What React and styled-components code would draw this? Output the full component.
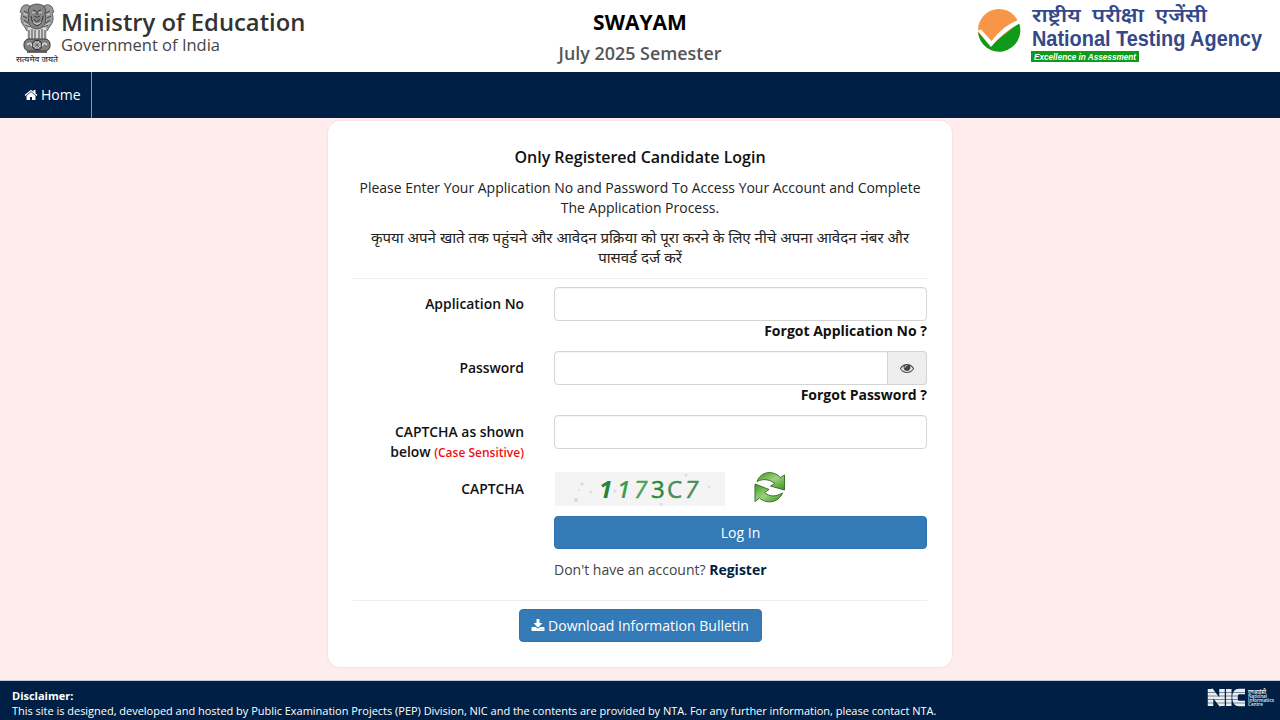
import { useState } from "react";
import styled, { createGlobalStyle } from "styled-components";

const HOME_PATH =
	"M1472 992v480q0 26-19 45t-45 19h-384v-384h-256v384h-384q-26 0-45-19t-19-45v-480q0-1 .5-3t.5-3l575-474 575 474q1 2 1 6zm223-69l-62 74q-8 9-21 11h-3q-13 0-21-7l-692-577-692 577q-12 8-24 7-13-2-21-11l-62-74q-8-10-7-23.5t11-21.5l719-599q32-26 76-26t76 26l244 204v-195q0-14 9-23t23-9h192q14 0 23 9t9 23v408l219 182q10 8 11 21.5t-7 23.5z";
const EYE_PATH =
	"M1664 960q-152-236-381-353 61 104 61 225 0 185-131.5 316.5t-316.5 131.5-316.5-131.5-131.5-316.5q0-121 61-225-229 117-381 353 133 205 333.5 326.5t434.5 121.5 434.5-121.5 333.5-326.5zm-720-384q0-20-14-34t-34-14q-125 0-214.5 89.5t-89.5 214.5q0 20 14 34t34 14 34-14 14-34q0-86 61-147t147-61q20 0 34-14t14-34zm848 384q0 34-20 69-140 230-376.5 368.5t-499.5 138.5-499.5-139-376.5-368q-20-35-20-69t20-69q140-229 376.5-368t499.5-139 499.5 139 376.5 368q20 35 20 69z";
const DOWNLOAD_PATH =
	"M1344 1344q0-26-19-45t-45-19-45 19-19 45 19 45 45 19 45-19 19-45zm256 0q0-26-19-45t-45-19-45 19-19 45 19 45 45 19 45-19 19-45zm128-224v320q0 40-28 68t-68 28h-1472q-40 0-68-28t-28-68v-320q0-40 28-68t68-28h465l135 136q58 56 136 56t136-56l136-136h464q40 0 68 28t28 68zm-325-569q17 41-14 70l-448 448q-18 19-45 19t-45-19l-448-448q-31-29-14-70 17-39 59-39h256v-448q0-26 19-45t45-19h256q26 0 45 19t19 45v448h256q42 0 59 39z";

const FaIcon = ({ path, size = 14 }) => (
	<svg width={size} height={size} viewBox="0 0 1792 1792" fill="currentColor">
		<path d={path} />
	</svg>
);

const Emblem = () => (
	<svg width="44" height="62" viewBox="0 0 44 62">
		{/* side lions */}
		<g fill="#9a9a9a" stroke="#4a4a4a" strokeWidth="0.8">
			<path d="M12 1C8 0 5 3 5 6l-1 2 2 1c-2 5-1 10 2 13l3 5h6V4z" />
			<path d="M30 1c4-1 7 2 7 5l1 2-2 1c2 5 1 10-2 13l-3 5h-6V4z" />
			<path d="M12 21l-1 12q0 6 3 8h14q3-2 3-8l-1-12z" fill="#d8d8d8" stroke="none" />
		</g>
		{/* front lion */}
		<path
			d="M14 2q7-4 14 0 3 4 1 8 2 8-2 13-6 4-12 0-4-5-2-13-2-4 1-8z"
			fill="#868686"
			stroke="#3c3c3c"
			strokeWidth="0.8"
		/>
		<g fill="none" stroke="#333" strokeWidth="0.9">
			<path d="M17 6l3 1M25 6l-3 1M21 7v4M18 12q3 3 6 0M15 12q1 9 6 10 5-1 6-10M18 15q3 5 6 0" />
			<path d="M8 7l4 2M7 12l4 2M8 16l4 3M34 7l-4 2M35 12l-4 2M34 16l-4 3M10 21l4 2M32 21l-4 2" />
			<path d="M13 26v10M16 25v12M19 26v11M23 26v11M26 25v12M29 26v10" />
		</g>
		<g stroke="#ddd" strokeWidth="0.9" fill="none">
			<path d="M16 9q2-2 3 0M23 9q2-2 3 0M17 18q4 4 8 0M8 10l3 1M34 10l-3 1M8 19l4 2M34 19l-4 2" />
		</g>
		{/* abacus with the wheel */}
		<rect x="8" y="35" width="26" height="12" rx="5" fill="#808080" stroke="#3c3c3c" />
		<circle cx="21" cy="41" r="4.600" fill="#ccc" stroke="#333" strokeWidth="1.200" />
		<path d="M21 37v8M17 41h8M18 38l6 6M24 38l-6 6" stroke="#555" strokeWidth="0.700" />
		<path d="M11 41q3-4 5 1M26 42q2-5 5-1" stroke="#ddd" strokeWidth="1.400" fill="none" />
		<path d="M11 48h20" stroke="#444" strokeWidth="1.600" />
		<text
			x="0"
			y="58"
			fontSize="8"
			fontWeight="500"
			fill="#333"
			textLength="42"
			lengthAdjust="spacingAndGlyphs"
		>
			सत्यमेव जयते
		</text>
	</svg>
);

const NtaLogo = () => (
	<svg width="292" height="66" viewBox="0 0 292 66">
		<circle cx="22" cy="27" r="21" fill="#f79646" />
		<path d="M1 29l12 14L42 20A21.200 21.200 0 1 1 1 29z" fill="#0f9a1a" />
		<path d="M0.500 27.500l3.500-1L14.500 38Q27 22 41 17l1.500 3.500Q26 29 14 44z" fill="#fff" />
		<g fill="#34488a">
			<text
				x="55"
				y="19"
				fontSize="19"
				fontWeight="600"
				textLength="175"
				wordSpacing="5"
				lengthAdjust="spacingAndGlyphs"
			>
				राष्ट्रीय परीक्षा एजेंसी
			</text>
			<text
				x="55"
				y="42.500"
				fontSize="21.500"
				fontWeight="700"
				fontFamily="Liberation Sans, Arial, sans-serif"
				textLength="230"
				lengthAdjust="spacingAndGlyphs"
			>
				National Testing Agency
			</text>
		</g>
		<rect x="54" y="48" width="108" height="11" fill="#0f9a1a" />
		<text
			x="57"
			y="56.700"
			fontSize="9"
			fontWeight="700"
			fontStyle="italic"
			fontFamily="Liberation Sans, Arial, sans-serif"
			fill="#fff"
			textLength="102"
			lengthAdjust="spacingAndGlyphs"
		>
			Excellence in Assessment
		</text>
	</svg>
);

const CaptchaImage = () => (
	<svg width="170" height="34" viewBox="0 0 170 34">
		<rect width="170" height="34" fill="#f5f4f5" />
		<g fill="#dddbe4">
			<circle cx="27" cy="12" r="1.800" />
			<circle cx="21" cy="28" r="2.200" />
			<circle cx="36" cy="20" r="1.500" />
			<circle cx="24" cy="18" r="1" />
			<circle cx="106" cy="32" r="1.500" />
			<circle cx="131" cy="3" r="1.500" />
			<circle cx="154" cy="15" r="1.200" />
			<circle cx="60" cy="19" r="1.500" />
		</g>
		<g fontFamily="Open Sans, sans-serif" fontSize="24" strokeWidth="0.500">
			<text x="44" y="26" fill="#24863a" fontWeight="700" fontStyle="italic">1</text>
			<text x="62" y="26" fill="#36a04a" fontWeight="600" fontStyle="italic">1</text>
			<text x="79" y="25.500" fill="#47a557" stroke="#47a557" fontStyle="italic">7</text>
			<text x="96" y="25.500" fill="#278b3d" stroke="#278b3d">3</text>
			<text x="112" y="25.500" fill="#478f58" stroke="#478f58">C</text>
			<text x="130" y="25.500" fill="#478f58" stroke="#478f58" fontStyle="italic">7</text>
		</g>
	</svg>
);

const RefreshIcon = () => (
	<svg width="32" height="32" viewBox="0 0 32 32">
		<defs>
			<linearGradient id="leaf" x1="0" y1="0" x2="1" y2="1">
				<stop offset="0" stopColor="#3f9427" />
				<stop offset="0.5" stopColor="#9bd57a" />
				<stop offset="1" stopColor="#3c8e26" />
			</linearGradient>
		</defs>
		<g fill="url(#leaf)" stroke="#3a6f2c" strokeWidth="1" strokeLinejoin="round">
			<path d="M3 9.500C7-1 19-2 26.500 5.500L30.500 3v15L16.500 14l4.500-2.500C15 7 9 6.500 3 9.500z" />
			<path d="M28.500 21C24 31.500 12 32 5.500 26L1 29.500V12l14 5.500-4.500 3c5 4.500 11 4.500 18 .5z" />
		</g>
	</svg>
);

const NicLogo = () => (
	<svg width="68" height="22" viewBox="0 0 68 22">
		<g fill="none" stroke="#e9edf2" strokeWidth="5.500">
			<path d="M3.500 18V1M15 18V1M3 2l12 15M21.800 18V1M38 3.500H32q-4 0-4 6t4 6h6" />
		</g>
		<path d="M0 4.500h38M0 8h38M0 11.500h38M0 15h38" stroke="#001f44" strokeWidth="0.500" />
		<g fill="#e9edf2" fontWeight="600">
			<text x="41" y="5.500" fontSize="6" textLength="18" lengthAdjust="spacingAndGlyphs">एनआईसी</text>
			<text x="41" y="10" fontSize="4.600">National</text>
			<text x="41" y="14" fontSize="4.600" textLength="26" lengthAdjust="spacingAndGlyphs">Informatics</text>
			<text x="41" y="18" fontSize="4.600">Centre</text>
		</g>
	</svg>
);

const App = () => {
	const [form, setForm] = useState({ appNo: "", password: "", captcha: "" });
	const [showPassword, setShowPassword] = useState(false);

	const handleChange = (e) => {
		setForm({ ...form, [e.target.name]: e.target.value });
	};

	return (
		<Page>
			<GlobalStyle />
			<Header>
				<Ministry>
					<Emblem />
					<div>
						<MinistryName>Ministry of Education</MinistryName>
						<Government>Government of India</Government>
					</div>
				</Ministry>
				<Exam>
					<h1>SWAYAM</h1>
					<p>July 2025 Semester</p>
				</Exam>
				<Agency>
					<NtaLogo />
				</Agency>
			</Header>
			<Nav>
				<NavLink href="#">
					<FaIcon path={HOME_PATH} size={14} />
					Home
				</NavLink>
			</Nav>
			<Main>
				<Card onSubmit={(e) => e.preventDefault()}>
					<Title>Only Registered Candidate Login</Title>
					<Intro>
						Please Enter Your Application No and Password To Access Your Account and Complete
						<br />
						The Application Process.
					</Intro>
					<Intro $hindi>
						कृपया अपने खाते तक पहुंचने और आवेदन प्रक्रिया को पूरा करने के लिए नीचे अपना आवेदन नंबर और
						<br />
						पासवर्ड दर्ज करें
					</Intro>
					<Divider $top={11} />
					<Row $height={64}>
						<Label>Application No</Label>
						<div>
							<Input name="appNo" value={form.appNo} onChange={handleChange} />
							<Forgot>Forgot Application No ?</Forgot>
						</div>
					</Row>
					<Row $height={64}>
						<Label>Password</Label>
						<div>
							<InputGroup>
								<Input
									$grouped
									name="password"
									type={showPassword ? "text" : "password"}
									value={form.password}
									onChange={handleChange}
								/>
								<Addon type="button" onClick={() => setShowPassword(!showPassword)}>
									<FaIcon path={EYE_PATH} size={14} />
								</Addon>
							</InputGroup>
							<Forgot>Forgot Password ?</Forgot>
						</div>
					</Row>
					<Row $height={57}>
						<Label>
							CAPTCHA as shown
							<br />
							below <small>(Case Sensitive)</small>
						</Label>
						<Input name="captcha" value={form.captcha} onChange={handleChange} />
					</Row>
					<Row $height={44}>
						<Label>CAPTCHA</Label>
						<Captcha>
							<CaptchaImage />
							<RefreshIcon />
						</Captcha>
					</Row>
					<Row $height={74}>
						<span />
						<div>
							<Button $block>Log In</Button>
							<Register>
								Don't have an account? <a href="#">Register</a>
							</Register>
						</div>
					</Row>
					<Divider $top={10} />
					<Download>
						<Button type="button">
							<FaIcon path={DOWNLOAD_PATH} size={14} />
							Download Information Bulletin
						</Button>
					</Download>
				</Card>
			</Main>
			<Footer>
				<div>
					<strong>Disclaimer:</strong>
					<p>
						This site is designed, developed and hosted by Public Examination Projects (PEP)
						Division, NIC and the contents are provided by NTA. For any further information,
						please contact NTA.
					</p>
				</div>
				<NicLogo />
			</Footer>
		</Page>
	);
};

export default App;

const GlobalStyle = createGlobalStyle`
	* {
		box-sizing: border-box;
	}
	body {
		margin: 0;
		overflow: hidden;
		font-family: "Open Sans", "Noto Sans", sans-serif;
		font-size: 14px;
		line-height: 20px;
		color: #333;
	}
	h1, h2, p {
		margin: 0;
	}
	svg {
		flex-shrink: 0;
		overflow: visible;
	}
`;

const Page = styled.div`
	display: flex;
	flex-direction: column;
	height: 720px;
	background: #ffecec;
`;

const Header = styled.header`
	display: grid;
	grid-template-columns: 1fr 300px 1fr;
	height: 72px;
	background: #fff;
`;

const Ministry = styled.div`
	display: flex;
	gap: 1px;
	padding: 4px 0 0 16px;
`;

const MinistryName = styled.div`
	margin-top: 3px;
	font-size: 23.800px;
	font-weight: 600;
	line-height: 30px;
	white-space: nowrap;
`;

const Government = styled.div`
	margin-top: -2px;
	font-size: 16.500px;
	line-height: 20px;
	color: #444;
`;

const Exam = styled.div`
	text-align: center;
	h1 {
		padding-top: 8px;
		font-size: 21px;
		font-weight: 700;
		line-height: 28px;
		color: #000;
	}
	p {
		margin-top: 5px;
		font-size: 17.900px;
		font-weight: 600;
		line-height: 24px;
		color: #555;
	}
`;

const Agency = styled.div`
	display: flex;
	justify-content: flex-end;
	padding: 3px 11px 0 0;
`;

const Nav = styled.nav`
	display: flex;
	height: 46px;
	background: #001f44;
`;

const NavLink = styled.a`
	display: flex;
	align-items: center;
	gap: 3px;
	width: 92px;
	padding-left: 24px;
	border-right: 1px solid #8b98aa;
	font-size: 14px;
	color: #fff;
	text-decoration: none;
`;

const Main = styled.main`
	display: flex;
	justify-content: center;
	align-items: flex-start;
	flex: 1;
	padding-top: 3px;
`;

const Card = styled.form`
	width: 624px;
	height: 546px;
	padding: 26px 25px 0;
	border-radius: 12px;
	background: #fff;
	box-shadow: 0 0 2px rgba(120, 60, 60, 0.15);
`;

const Title = styled.h2`
	font-size: 16px;
	font-weight: 600;
	line-height: 20px;
	text-align: center;
	color: #111;
`;

const Intro = styled.p`
	margin-top: ${(props) => (props.$hindi ? 9 : 11)}px;
	font-size: ${(props) => (props.$hindi ? 15.05 : 13.97)}px;
	line-height: 20px;
	text-align: center;
	white-space: nowrap;
	color: #222;
`;

const Divider = styled.div`
	height: 1px;
	margin: ${(props) => props.$top}px 0 8px;
	background: #eee;
`;

const Row = styled.div`
	display: grid;
	grid-template-columns: 171px 373px;
	column-gap: 30px;
	height: ${(props) => props.$height}px;
`;

const Label = styled.label`
	padding-top: 7px;
	font-size: 13.900px;
	font-weight: 600;
	text-align: right;
	color: #111;
	small {
		font-size: 12px;
		color: #f01010;
	}
`;

const Input = styled.input`
	display: block;
	width: 100%;
	min-width: 0;
	height: 34px;
	padding: 6px 12px;
	border: 1px solid #d4d4d7;
	border-radius: ${(props) => (props.$grouped ? "4px 0 0 4px" : "4px")};
	outline: none;
	font: inherit;
	background: #fff;
	box-shadow: inset 0 1px 1px rgba(0, 0, 0, 0.05);
`;

const InputGroup = styled.div`
	display: flex;
`;

const Addon = styled.button`
	display: flex;
	align-items: center;
	justify-content: center;
	width: 39px;
	flex-shrink: 0;
	padding: 0;
	border: 1px solid #d4d4d7;
	border-left: 0;
	border-radius: 0 4px 4px 0;
	background: #eee;
	color: #444;
`;

const Forgot = styled.div`
	font-weight: 700;
	text-align: right;
	color: #111;
`;

const Captcha = styled.div`
	display: flex;
	gap: 29px;
	padding-left: 1px;
`;

const Button = styled.button`
	display: flex;
	align-items: center;
	justify-content: center;
	gap: 3px;
	width: ${(props) => (props.$block ? "100%" : "243px")};
	height: 33px;
	padding: 0;
	border: 1px solid #2e72b0;
	border-radius: 4px;
	background: #337ab7;
	font: inherit;
	color: #fff;
	white-space: nowrap;
`;

const Register = styled.p`
	margin-top: 11px;
	color: #444;
	a {
		font-weight: 700;
		color: #001f44;
		text-decoration: none;
	}
`;

const Download = styled.div`
	display: flex;
	justify-content: center;
`;

const Footer = styled.footer`
	display: flex;
	justify-content: space-between;
	height: 40px;
	padding: 7px 5px 0 12px;
	border-top: 1px solid #c5c8cf;
	background: #001f44;
	font-size: 11px;
	line-height: 15px;
	color: #fff;
	p {
		letter-spacing: -0.020px;
		white-space: nowrap;
	}
`;
